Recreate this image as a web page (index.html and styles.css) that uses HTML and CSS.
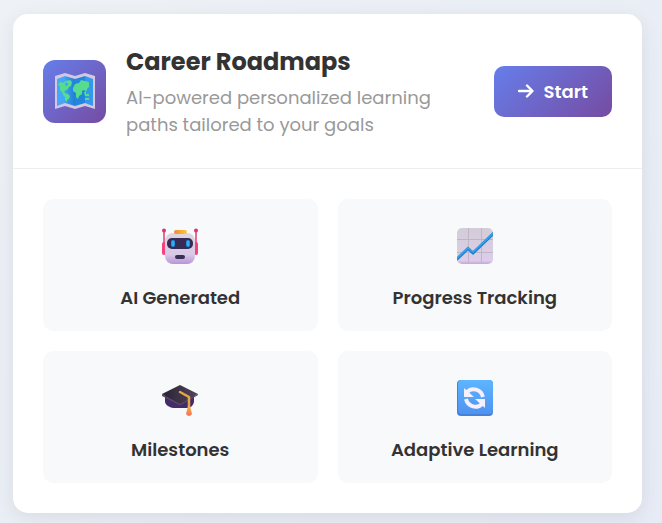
FILE: index.html
```
<!DOCTYPE html>
<html lang="en">

<head>
    <meta charset="UTF-8">
    <meta name="viewport" content="width=device-width, initial-scale=1.0">
    <title>Career Roadmaps</title>
    <link rel="stylesheet" href="styles.css">
</head>

<body>
    <main class="card">
        <header class="card-header">
            <div class="card-icon">
                <svg viewBox="0 0 40 36" width="40" height="36" aria-hidden="true">
                    <defs>
                        <linearGradient id="sea" x1="0" x2="1">
                            <stop offset="0" stop-color="#3f9ff0" />
                            <stop offset="1" stop-color="#1f7fd4" />
                        </linearGradient>
                    </defs>
                    <path d="M0 3 10 0l10 3L30 0l10 3v33l-10-3-10 3-10-3-10 3z" fill="#d5c6e2" />
                    <path d="M2 6 10 3v27l-8 3z" fill="#45a7f8" />
                    <path d="M10 3 20 6v27l-10-3z" fill="url(#sea)" />
                    <path d="M20 6 30 3v27l-10 3z" fill="#2286da" />
                    <path d="M30 3 38 6v27l-8-3z" fill="#3498ec" />
                    <path d="M3 12l2-3 4 1 1-2 5-1 2 2-1 4-2 1-2 3-3 1 1 2 3 1 2 2-1 3-2 1v2l-2-2v-3l-2-2-1-3-2-2v-4z" fill="#55dc91" />
                    <path d="M11 9l2 2-1 2-2-1z" fill="#3f9ff0" />
                    <path d="M18 15l2-4 4-1 2-3 4 1 4 1v5l-2 2-1 3-2-2-2 1v3l-3 2-1 3-2-2v-4l-3-2z" fill="#55dc91" />
                    <path d="M29 19h2v2h3v2h-4zM30 25h4v2h-4z" fill="#55dc91" />
                </svg>
            </div>
            <div class="card-info">
                <h1 class="card-title">Career Roadmaps</h1>
                <p class="card-text">AI-powered personalized learning paths tailored to your goals</p>
            </div>
            <button class="btn-start" type="button">
                <svg viewBox="0 0 16 14" width="16" height="14" aria-hidden="true">
                    <path d="M1 7h13M9 1.500 14.500 7 9 12.500" fill="none" stroke="#fff" stroke-width="2.400" stroke-linecap="round" stroke-linejoin="round" />
                </svg>
                Start
            </button>
        </header>

        <ul class="features">
            <li class="feature">
                <div class="feature-icon">
                    <svg viewBox="0 0 36 36" width="36" height="36" aria-hidden="true">
                        <defs>
                            <linearGradient id="head" x1="0" y1="0" x2="0" y2="1">
                                <stop offset="0" stop-color="#ddd5e3" />
                                <stop offset=".7" stop-color="#d8c9e6" />
                                <stop offset="1" stop-color="#b994d8" />
                            </linearGradient>
                            <linearGradient id="cap" x1="0" x2="1">
                                <stop offset="0" stop-color="#e88b35" />
                                <stop offset="1" stop-color="#ffc83a" />
                            </linearGradient>
                        </defs>
                        <path d="M2 3v12M34 3v12" stroke="#e33a70" stroke-width="1.500" />
                        <circle cx="2" cy="2.500" r="2" fill="#e03568" />
                        <circle cx="34" cy="2.500" r="2" fill="#e03568" />
                        <rect x="0" y="14" width="4" height="13" rx="2" fill="#f5427d" />
                        <rect x="32" y="14" width="4" height="13" rx="2" fill="#f5427d" />
                        <rect x="3" y="5" width="30" height="31" rx="8" fill="url(#head)" />
                        <rect x="12" y="2" width="13" height="4" rx="2" fill="url(#cap)" />
                        <rect x="5" y="10" width="26" height="11" rx="5" fill="#352c56" />
                        <rect x="9" y="12" width="4" height="7" rx="2" fill="#2292e8" />
                        <rect x="24" y="12" width="4" height="7" rx="2" fill="#2292e8" />
                        <path d="M11 13v5M26 13v5" stroke="#43c5f8" stroke-width="1" />
                        <rect x="13" y="27" width="10" height="4" rx="2" fill="#392f54" />
                    </svg>
                </div>
                <h2 class="feature-name">AI Generated</h2>
            </li>
            <li class="feature">
                <div class="feature-icon">
                    <svg viewBox="0 0 36 36" width="36" height="36" aria-hidden="true">
                        <defs>
                            <linearGradient id="paper" x1="0" y1="0" x2="0" y2="1">
                                <stop offset="0" stop-color="#d3cdd7" />
                                <stop offset=".9" stop-color="#dccdea" />
                                <stop offset="1" stop-color="#c4a7dc" />
                            </linearGradient>
                            <clipPath id="sheet">
                                <rect width="36" height="36" rx="5" />
                            </clipPath>
                        </defs>
                        <rect width="36" height="36" rx="5" fill="url(#paper)" />
                        <path d="M11.500 0v36M24.500 0v36M0 11.500h36M0 24.500h36" stroke="#bfb5c8" stroke-width="1" />
                        <g clip-path="url(#sheet)" fill="none">
                            <path d="M-1 32 11 20.500 16 25 38 4" stroke="#1c7fd0" stroke-width="3" />
                            <path d="M-1 31 11 20 16 24 38 3.500" stroke="#38a4ed" stroke-width="1.500" />
                        </g>
                    </svg>
                </div>
                <h2 class="feature-name">Progress Tracking</h2>
            </li>
            <li class="feature">
                <div class="feature-icon">
                    <svg viewBox="0 0 36 36" width="36" height="36" aria-hidden="true">
                        <defs>
                            <linearGradient id="board" x1="0" x2="1">
                                <stop offset="0" stop-color="#292333" />
                                <stop offset="1" stop-color="#534559" />
                            </linearGradient>
                            <linearGradient id="tassel" x1="0" y1="0" x2="0" y2="1">
                                <stop offset="0" stop-color="#efb34a" />
                                <stop offset="1" stop-color="#ff6d50" />
                            </linearGradient>
                        </defs>
                        <path d="M3 14v8c1 4 6 6 10 6h13c4-1 6-4 6-7v-7z" fill="#452b68" />
                        <path d="M0 14 18 23 36 14v1L19 25h-2L0 16z" fill="#5b476c" />
                        <path d="M0 14 18 5 36 14 18 24z" fill="url(#board)" />
                        <path d="M18 12 27 17v11" fill="none" stroke="#e5a64a" stroke-width="2.500" stroke-linecap="round" stroke-linejoin="round" />
                        <path d="M26 26h2l2 8q-3 4-6 0z" fill="url(#tassel)" />
                    </svg>
                </div>
                <h2 class="feature-name">Milestones</h2>
            </li>
            <li class="feature">
                <div class="feature-icon">
                    <svg viewBox="0 0 36 36" width="36" height="36" aria-hidden="true">
                        <defs>
                            <linearGradient id="key" x1="0" y1="0" x2="0" y2="1">
                                <stop offset="0" stop-color="#5db5ff" />
                                <stop offset="1" stop-color="#4f93f0" />
                            </linearGradient>
                        </defs>
                        <rect width="36" height="36" rx="4" fill="#4482d6" />
                        <rect x="1" width="35" height="34" rx="4" fill="url(#key)" />
                        <path d="M7 8v9h10z" fill="#f6effd" />
                        <path d="M28 28v-9H18z" fill="#f6effd" />
                        <path d="M10 12c5-5 14-3 16 5M25 24c-5 5-14 3-16-5" fill="none" stroke="#f6effd" stroke-width="4" />
                    </svg>
                </div>
                <h2 class="feature-name">Adaptive Learning</h2>
            </li>
        </ul>
    </main>
</body>

</html>
```

FILE: styles.css
```
* {
    padding: 0;
    margin: 0;
    box-sizing: border-box;
}

body {
    min-height: 100vh;
    padding: 14px 20px 10px 13px;
    background: linear-gradient(135deg, #eef1f5, #e6ebf5);
    color: #333;
    font-family: "Poppins", "Inter", sans-serif;
    font-size: 18px;
    line-height: 27px;
}

.card {
    background-color: white;
    border-radius: 15px;
    box-shadow: 0 5px 20px rgba(0, 0, 0, 0.08);
}

.card-header {
    display: flex;
    align-items: center;
    gap: 20px;
    padding: 30px;
    border-bottom: 1px solid #eee;
}

.card-icon {
    display: flex;
    align-items: center;
    justify-content: center;
    flex-shrink: 0;
    width: 63px;
    height: 63px;
    border-radius: 12px;
    background: linear-gradient(135deg, #667eea, #764ba2);
}

.card-info {
    flex: 1;
}

.card-title {
    margin-bottom: 4px;
    font-size: 24px;
    font-weight: 700;
    line-height: 36px;
}

.card-text {
    max-width: 320px;
    color: #999;
}

.btn-start {
    display: flex;
    align-items: center;
    gap: 10px;
    padding: 12px 24px;
    border: none;
    border-radius: 10px;
    background: linear-gradient(135deg, #667eea, #764ba2);
    color: white;
    font: inherit;
    font-weight: 600;
    cursor: pointer;
}

.features {
    display: grid;
    grid-template-columns: 1fr 1fr;
    gap: 20px;
    padding: 30px;
    list-style: none;
}

.feature {
    padding: 20px;
    border-radius: 10px;
    background-color: #f8f9fb;
    text-align: center;
}

.feature-icon {
    display: flex;
    align-items: center;
    justify-content: center;
    height: 54px;
    margin-bottom: 11px;
}

.feature-name {
    font-size: 18px;
    font-weight: 600;
    line-height: 27px;
}
```
